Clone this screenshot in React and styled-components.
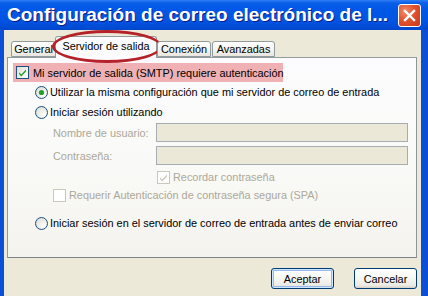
import React from 'react';
import styled, { createGlobalStyle } from 'styled-components';

const GlobalStyle = createGlobalStyle`
  html, body {
    margin: 0;
    padding: 0;
    background: #ECE9D8;
  }
  body {
    font-family: "Liberation Sans", Arial, sans-serif;
    font-size: 10.9px;
    color: #000;
  }
`;

// Window frame
const Window = styled.div`
  width: 428px;
  height: 296px;
  display: flex;
  flex-direction: column;
  overflow: hidden;
  background: #ECE9D8;
`;

const TitleBar = styled.div`
  height: 30px;
  flex: none;
  display: flex;
  align-items: center;
  padding-left: 7px;
  padding-right: 7px;
  background: linear-gradient(to bottom, #2F7CF6 0px, #0A5FE8 3px, #0058E6 30%, #0054E3 70%, #0047CC 100%);
`;

const Title = styled.div`
  flex: 1;
  color: #fff;
  font-family: "Liberation Sans", Arial, sans-serif;
  font-weight: bold;
  font-size: 19px;
  white-space: nowrap;
  text-shadow: 1px 1px 0 #0A1D83;
`;

const CloseButton = styled.div`
  width: 21px;
  height: 21px;
  flex: none;
  border: 1px solid #fff;
  border-radius: 3px;
  background: radial-gradient(circle at 30% 30%, #F08C6C 0%, #E2522D 45%, #C8391A 100%);
  display: flex;
  align-items: center;
  justify-content: center;
`;

const Client = styled.div`
  flex: 1;
  display: flex;
  flex-direction: column;
  border-left: 4px solid #0B4FD6;
  border-right: 7px solid #0B4FD6;
  padding: 6px 4px 0 3px;
`;

// Tabs
const TabStrip = styled.div`
  height: 21px;
  display: flex;
  align-items: flex-end;
  padding-left: 3px;
  position: relative;
  z-index: 1;
`;

const Tab = styled.div`
  position: relative;
  box-sizing: border-box;
  height: ${p => (p.$active ? 22 : 16)}px;
  margin-bottom: ${p => (p.$active ? -1 : 0)}px;
  margin-left: ${p => (p.$active ? -1 : 1)}px;
  margin-right: ${p => (p.$active ? -1 : 0)}px;
  width: ${p => p.$w}px;
  border: 1px solid #919B9C;
  border-bottom: ${p => (p.$active ? 'none' : '1px solid #919B9C')};
  border-radius: 3px 3px 0 0;
  background: ${p => (p.$active ? '#FCFCFE' : 'linear-gradient(to bottom, #FFFFFF, #F3F3EF 60%, #E8E6DD)')};
  display: flex;
  align-items: center;
  justify-content: center;
  padding-bottom: ${p => (p.$active ? 3 : 0)}px;
  white-space: nowrap;
`;

const Highlight = styled.div`
  position: absolute;
  left: -4px;
  top: -7px;
  width: 104px;
  height: 27px;
  border: 3px solid #B52229;
  border-radius: 50%;
  pointer-events: none;
`;

const Panel = styled.div`
  height: 201px;
  box-sizing: border-box;
  border: 1px solid #919B9C;
  border-right-color: #8E9499;
  border-bottom-color: #7F8489;
  background: linear-gradient(to bottom, #FCFCFE 0%, #F9F9F6 60%, #F4F3EE 100%);
  padding: 5px 0 0 0;
  display: flex;
  flex-direction: column;
`;

const AuthRow = styled.div`
  height: 19px;
  width: 270px;
  margin-left: 5px;
  background: #EFB1B4;
  display: flex;
  align-items: center;
  padding-left: 3px;
  box-sizing: border-box;
  gap: 4px;
  white-space: nowrap;
`;

const Row = styled.div`
  height: ${p => p.$h || 20}px;
  margin-top: ${p => p.$mt || 0}px;
  padding-left: ${p => p.$indent}px;
  display: flex;
  align-items: center;
  gap: ${p => p.$gap ?? 2}px;
  color: ${p => (p.$disabled ? '#ACA899' : '#000')};
  white-space: nowrap;
`;

const FieldLabel = styled.div`
  width: 103px;
  flex: none;
`;

const Input = styled.div`
  width: 252px;
  height: 19px;
  box-sizing: border-box;
  border: 1px solid #A5ACB2;
  background: #EBE8D8;
`;

// Buttons
const ButtonRow = styled.div`
  display: flex;
  justify-content: flex-end;
  gap: 20px;
  margin-top: 10px;
`;

const Button = styled.div`
  width: 63px;
  height: 21px;
  box-sizing: border-box;
  border: 1px solid #003C74;
  border-radius: 3px;
  background: linear-gradient(to bottom, #FFFFFF 0%, #F8F8F5 40%, #ECEBE6 85%, #D6D0C5 100%);
  display: flex;
  align-items: center;
  justify-content: center;
  box-shadow: ${p => (p.$default ? 'inset 0 0 0 1px #CEE7FF, inset 0 0 0 2px #98B8EA' : 'none')};
`;

const Checkbox = ({ checked, disabled }) => {
  const border = disabled ? '#CAC8BB' : '#1C5180';
  const tick = disabled ? '#CAC8BB' : '#21A121';
  return (
    <svg width="13" height="13" viewBox="0 0 13 13" style={{ flex: 'none' }}>
      <defs>
        <linearGradient id={disabled ? 'cbd' : 'cbe'} x1="0" y1="0" x2="1" y2="1">
          <stop offset="0" stopColor={disabled ? '#FFFFFF' : '#DCDCD7'} />
          <stop offset="1" stopColor="#FFFFFF" />
        </linearGradient>
      </defs>
      <rect x="0.5" y="0.5" width="12" height="12" fill={`url(#${disabled ? 'cbd' : 'cbe'})`} stroke={border} />
      {checked && (
        <path d="M3 6.2 L5.2 8.6 L10 3.6 L10 5.4 L5.2 10.4 L3 8 Z" fill={tick} />
      )}
    </svg>
  );
};

const Radio = ({ checked }) => (
  <svg width="13" height="13" viewBox="0 0 13 13" style={{ flex: 'none' }}>
    <defs>
      <radialGradient id="rb" cx="0.7" cy="0.7" r="0.8">
        <stop offset="0" stopColor="#FFFFFF" />
        <stop offset="1" stopColor="#DCDCD7" />
      </radialGradient>
    </defs>
    <circle cx="6.5" cy="6.5" r="6" fill="url(#rb)" stroke="#1C5180" />
    {checked && <circle cx="6.5" cy="6.5" r="2.6" fill="#21A121" />}
  </svg>
);

const App = () => (
  <>
    <GlobalStyle />
    <Window>
      <TitleBar>
        <Title>Configuración de correo electrónico de l...</Title>
        <CloseButton>
          <svg width="13" height="13" viewBox="0 0 13 13">
            <path d="M2 2 L11 11 M11 2 L2 11" stroke="#fff" strokeWidth="2.4" strokeLinecap="square" />
          </svg>
        </CloseButton>
      </TitleBar>
      <Client>
        <TabStrip>
          <Tab $w={45}>General</Tab>
          <Tab $w={102} $active>
            Servidor de salida
            <Highlight />
          </Tab>
          <Tab $w={54}>Conexión</Tab>
          <Tab $w={63}>Avanzadas</Tab>
        </TabStrip>
        <Panel>
          <AuthRow>
            <Checkbox checked />
            Mi servidor de salida (SMTP) requiere autenticación
          </AuthRow>
          <Row $indent={27}>
            <Radio checked />
            Utilizar la misma configuración que mi servidor de correo de entrada
          </Row>
          <Row $indent={27}>
            <Radio />
            Iniciar sesión utilizando
          </Row>
          <Row $indent={45} $h={19} $mt={1} $disabled $gap={0}>
            <FieldLabel>Nombre de usuario:</FieldLabel>
            <Input />
          </Row>
          <Row $indent={45} $h={19} $mt={4} $disabled $gap={0}>
            <FieldLabel>Contraseña:</FieldLabel>
            <Input />
          </Row>
          <Row $indent={149} $h={18} $mt={3} $disabled $gap={3}>
            <Checkbox checked disabled />
            Recordar contraseña
          </Row>
          <Row $indent={45} $h={18} $disabled $gap={3}>
            <Checkbox disabled />
            Requerir Autenticación de contraseña segura (SPA)
          </Row>
          <Row $indent={27} $mt={9}>
            <Radio />
            Iniciar sesión en el servidor de correo de entrada antes de enviar correo
          </Row>
        </Panel>
        <ButtonRow>
          <Button $default>Aceptar</Button>
          <Button>Cancelar</Button>
        </ButtonRow>
      </Client>
    </Window>
  </>
);

export default App;
